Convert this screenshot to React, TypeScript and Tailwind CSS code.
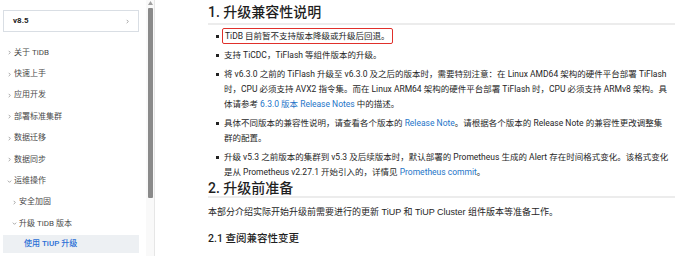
const NAV = [
  { label: '关于 TiDB', depth: 0, icon: 'right' },
  { label: '快速上手', depth: 0, icon: 'right' },
  { label: '应用开发', depth: 0, icon: 'right' },
  { label: '部署标准集群', depth: 0, icon: 'right' },
  { label: '数据迁移', depth: 0, icon: 'right' },
  { label: '数据同步', depth: 0, icon: 'right' },
  { label: '运维操作', depth: 0, icon: 'down' },
  { label: '安全加固', depth: 1, icon: 'right' },
  { label: '升级 TiDB 版本', depth: 1, icon: 'down' },
]

function Chevron({ dir }: { dir: 'right' | 'down' }) {
  return (
    <svg width="5" height="5" viewBox="0 0 6 6" className="shrink-0">
      {dir === 'right' ? (
        <path d="M2 1 L4 3 L2 5" fill="none" stroke="#8c8c8c" strokeWidth="0.9" />
      ) : (
        <path d="M1 2 L3 4 L5 2" fill="none" stroke="#8c8c8c" strokeWidth="0.9" />
      )}
    </svg>
  )
}

function Link({ children }: { children: React.ReactNode }) {
  return <span className="text-[#2474c8]">{children}</span>
}

function Bullet({ children }: { children: React.ReactNode }) {
  return (
    <li className="flex">
      <span className="w-[16px] shrink-0 pl-[8px] pt-[6px]">
        <span className="block w-[3px] h-[3px] bg-[#222]" />
      </span>
      <div className="whitespace-nowrap">{children}</div>
    </li>
  )
}

export default function App() {
  return (
    <div className="w-[690px] h-[256px] overflow-hidden bg-white flex font-['Roboto','Noto_Sans_CJK_SC',sans-serif]">
      <aside className="w-[146px] shrink-0 pl-[3px] pr-[7px] pt-[10px]">
        <div className="h-[22px] border border-[#d9dee4] flex items-center justify-between pl-[9px] pr-[8px]">
          <span className="text-[8px] font-bold text-[#222]">v8.5</span>
          <Chevron dir="right" />
        </div>
        <nav className="mt-[10px]">
          {NAV.map((item) => (
            <div
              key={item.label}
              className={`h-[21.4px] flex items-center gap-[2px] text-[8px] text-[#4a4a4a] ${
                item.depth === 1 ? 'pl-[9px]' : 'pl-[4px]'
              }`}
            >
              <Chevron dir={item.icon as 'right' | 'down'} />
              <span>{item.label}</span>
            </div>
          ))}
          <div className="h-[18px] bg-[#edf0f3] flex items-center pl-[21px] text-[8px] font-medium text-[#2a6fd6]">
            使用 TiUP 升级
          </div>
        </nav>
      </aside>

      <div className="w-[9px] shrink-0 bg-[#f9f9f9] border-r border-[#e6e6e6] flex flex-col items-center">
        <svg width="5" height="4" viewBox="0 0 5 4" className="mt-[1px]">
          <path d="M2.5 0 L5 4 L0 4 Z" fill="#a0a0a0" />
        </svg>
        <div className="w-[5px] h-[190px] mt-[3px] bg-[#8a8a8a] rounded-[1px]" />
      </div>

      <main className="flex-1 pl-[53px] pr-[15px] text-[#262626]">
        <h1 className="text-[14px] leading-[18px] pt-[3px] pb-[2px] border-b-2 border-[#ececec] font-medium text-[#1f1f1f]">
          1. 升级兼容性说明
        </h1>
        <ul className="mt-[3px] text-[8.5px] leading-[15px] flex flex-col gap-[4px]">
          <li className="flex">
            <span className="w-[16px] shrink-0 pl-[8px] pt-[7px]">
              <span className="block w-[3px] h-[3px] bg-[#222]" />
            </span>
            <span className="ml-[-2px] inline-block leading-[12px] border-[1.5px] border-[#e0302b] rounded-[2px] px-[2px] py-[1px] whitespace-nowrap">
              TiDB 目前暂不支持版本降级或升级后回退。
            </span>
          </li>
          <Bullet>支持 TiCDC，TiFlash 等组件版本的升级。</Bullet>
          <Bullet>
            将 v6.3.0 之前的 TiFlash 升级至 v6.3.0 及之后的版本时，需要特别注意：在 Linux AMD64 架构的硬件平台部署 TiFlash
            <br />
            时，CPU 必须支持 AVX2 指令集。而在 Linux ARM64 架构的硬件平台部署 TiFlash 时，CPU 必须支持 ARMv8 架构。具
            <br />
            体请参考 <Link>6.3.0 版本 Release Notes</Link> 中的描述。
          </Bullet>
          <Bullet>
            具体不同版本的兼容性说明，请查看各个版本的 <Link>Release Note</Link>。请根据各个版本的 Release Note 的兼容性更改调整集
            <br />
            群的配置。
          </Bullet>
          <Bullet>
            升级 v5.3 之前版本的集群到 v5.3 及后续版本时，默认部署的 Prometheus 生成的 Alert 存在时间格式变化。该格式变化
            <br />
            是从 Prometheus v2.27.1 开始引入的，详情见 <Link>Prometheus commit</Link>。
          </Bullet>
        </ul>

        <h2 className="text-[14px] leading-[16px] border-b-2 border-[#ececec] font-medium text-[#1f1f1f]">
          2. 升级前准备
        </h2>
        <p className="mt-[8px] text-[9px] leading-[13px] font-['Liberation_Sans','Noto_Sans_CJK_SC',sans-serif]">
          本部分介绍实际开始升级前需要进行的更新 TiUP 和 TiUP Cluster 组件版本等准备工作。
        </p>
        <h3 className="mt-[12px] text-[10.5px] leading-[15px] font-medium text-[#1f1f1f]">2.1 查阅兼容性变更</h3>
      </main>
    </div>
  )
}
